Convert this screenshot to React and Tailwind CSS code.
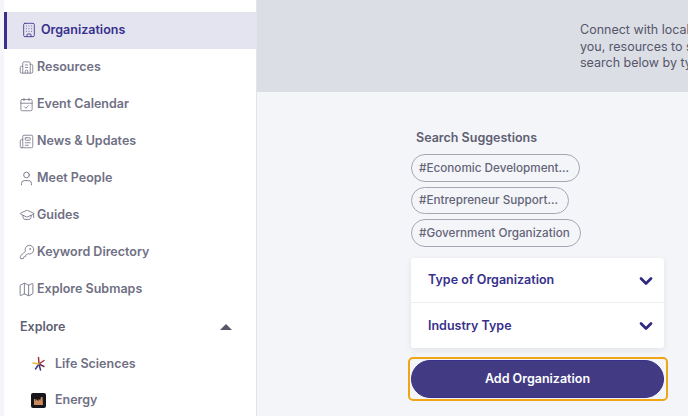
import React from 'react'
import { Building, Building2, CalendarCheck, Newspaper, User, GraduationCap, KeyRound, Map, ChevronDown } from 'lucide-react'

const navItems = [
  { name: 'Resources', icon: Building2, size: 'h-[15px] w-[15px]' },
  { name: 'Event Calendar', icon: CalendarCheck, size: 'h-[15px] w-[15px]' },
  { name: 'News & Updates', icon: Newspaper, size: 'h-[15px] w-[15px]' },
  { name: 'Meet People', icon: User, size: 'h-[17px] w-[17px]' },
  { name: 'Guides', icon: GraduationCap, size: 'h-[16px] w-[16px]' },
  { name: 'Keyword Directory', icon: KeyRound, size: 'h-[16px] w-[16px]' },
  { name: 'Explore Submaps', icon: Map, size: 'h-[17px] w-[17px]' },
]

const tags = ['#Economic Development...', '#Entrepreneur Support...', '#Government Organization']

function LifeSciencesIcon() {
  return (
    <svg width="16" height="16" viewBox="0 0 16 16" fill="none" strokeWidth="1.5" strokeLinecap="round">
      <path d="M8 8 L7.5 1.5" stroke="#a3343c" />
      <path d="M8 8 L13 4.5" stroke="#a3343c" />
      <path d="M8 8 L13 10.5" stroke="#7a2a4a" />
      <path d="M8 8 L9.5 14" stroke="#3f3a85" />
      <path d="M8 8 L4.5 13" stroke="#3f3a85" />
      <path d="M8 8 L2 7" stroke="#e8b93c" />
    </svg>
  )
}

function EnergyIcon() {
  return (
    <div className="flex h-[15px] w-[15px] items-center justify-center rounded-[2px] bg-[#17161a]">
      <svg width="9" height="8" viewBox="0 0 9 8" fill="#c98a5e">
        <path d="M0 8V2h1.5v2L3 2v2l1.5-2v2L6 2v2l1-4h1.5L9 8z" />
      </svg>
    </div>
  )
}

function NavRow({ item }) {
  const Icon = item.icon
  return (
    <div className="flex h-[37px] items-center gap-[3px] pb-px pl-[15px] text-[#6f7084]">
      <div className="flex w-[15px] shrink-0 justify-center">
        <Icon className={`${item.size} shrink-0`} strokeWidth={1.25} />
      </div>
      <span className="text-[12.5px] font-semibold">{item.name}</span>
    </div>
  )
}

function Sidebar() {
  return (
    <aside className="ml-1 h-[416px] w-[253px] shrink-0 overflow-hidden border-r border-[#e3e4ea] bg-white pt-3">
      <div className="flex h-[37px] items-center gap-1 border-l-[3px] border-[#3a2f8f] bg-[#e4e4f0] pb-px pl-[14px] text-[#37308c]">
        <Building className="h-4 w-4 shrink-0" strokeWidth={1.25} />
        <span className="text-[12.5px] font-semibold">Organizations</span>
      </div>
      {navItems.map((item) => (
        <NavRow key={item.name} item={item} />
      ))}
      <div className="flex h-[38px] items-center justify-between pl-4 pr-6 text-[#5e5f73]">
        <span className="text-[12.5px] font-semibold">Explore</span>
        <div className="h-0 w-0 border-x-[6px] border-b-[6px] border-x-transparent border-b-[#56576b]" />
      </div>
      <div className="flex h-[36px] items-center gap-2 pl-[27px] text-[#6f7084]">
        <LifeSciencesIcon />
        <span className="text-[12.5px] font-semibold">Life Sciences</span>
      </div>
      <div className="flex h-[37px] items-center gap-[9px] pl-[27px] text-[#6f7084]">
        <EnergyIcon />
        <span className="text-[12.5px] font-semibold">Energy</span>
      </div>
    </aside>
  )
}

function Dropdown({ label, last }) {
  return (
    <div className={`flex h-[45px] items-center justify-between pl-[17px] pr-2 ${last ? '' : 'border-b border-[#eceef4]'}`}>
      <span className="pt-px text-[12.5px] font-semibold text-[#37308c]">{label}</span>
      <ChevronDown className="mt-px h-5 w-5 text-[#2f2a80]" strokeWidth={3.25} />
    </div>
  )
}

export default function App() {
  return (
    <div className="flex h-[416px] w-[688px] overflow-hidden bg-[#f4f5f8] font-['Inter',sans-serif]">
      <Sidebar />
      <main className="min-w-0 flex-1">
        <div className="flex h-[92px] justify-end overflow-hidden bg-[#dcdee6] pl-[323px] pt-[22px]">
          <p className="w-full overflow-hidden whitespace-nowrap text-[12.5px] leading-[16.5px] text-[#55566a]">
            Connect with local organizations near
            <br />
            you, resources to support your work,
            <br />
            search below by type or by industry.
          </p>
        </div>
        <div className="ml-[154px] w-[253px] pt-[38px]">
          <h2 className="pl-[5px] text-[12.5px] leading-4 font-semibold text-[#5e5f73]">Search Suggestions</h2>
          <div className="mt-2 flex flex-col items-start gap-[5px]">
            {tags.map((tag) => (
              <span key={tag} className="flex h-[27.5px] items-center rounded-full border border-[#a5a6b4] pl-[7px] pr-[10px] pt-[2px] text-[11.7px] font-medium whitespace-nowrap text-[#636478]">
                {tag}
              </span>
            ))}
          </div>
          <div className="mt-[11.5px] rounded-[3px] bg-white shadow-[0_2px_6px_rgba(30,30,70,0.08)]">
            <Dropdown label="Type of Organization" />
            <Dropdown label="Industry Type" last />
          </div>
          <div className="-ml-[3px] -mr-[4px] mt-[9px] rounded-[5px] border-2 border-[#eea616] py-px pl-px pr-[2px]">
            <button className="flex h-[38px] w-full items-center justify-center rounded-full border border-[#37308c] bg-[#423b84] text-[12.5px] font-semibold text-white">
              Add Organization
            </button>
          </div>
        </div>
      </main>
    </div>
  )
}
